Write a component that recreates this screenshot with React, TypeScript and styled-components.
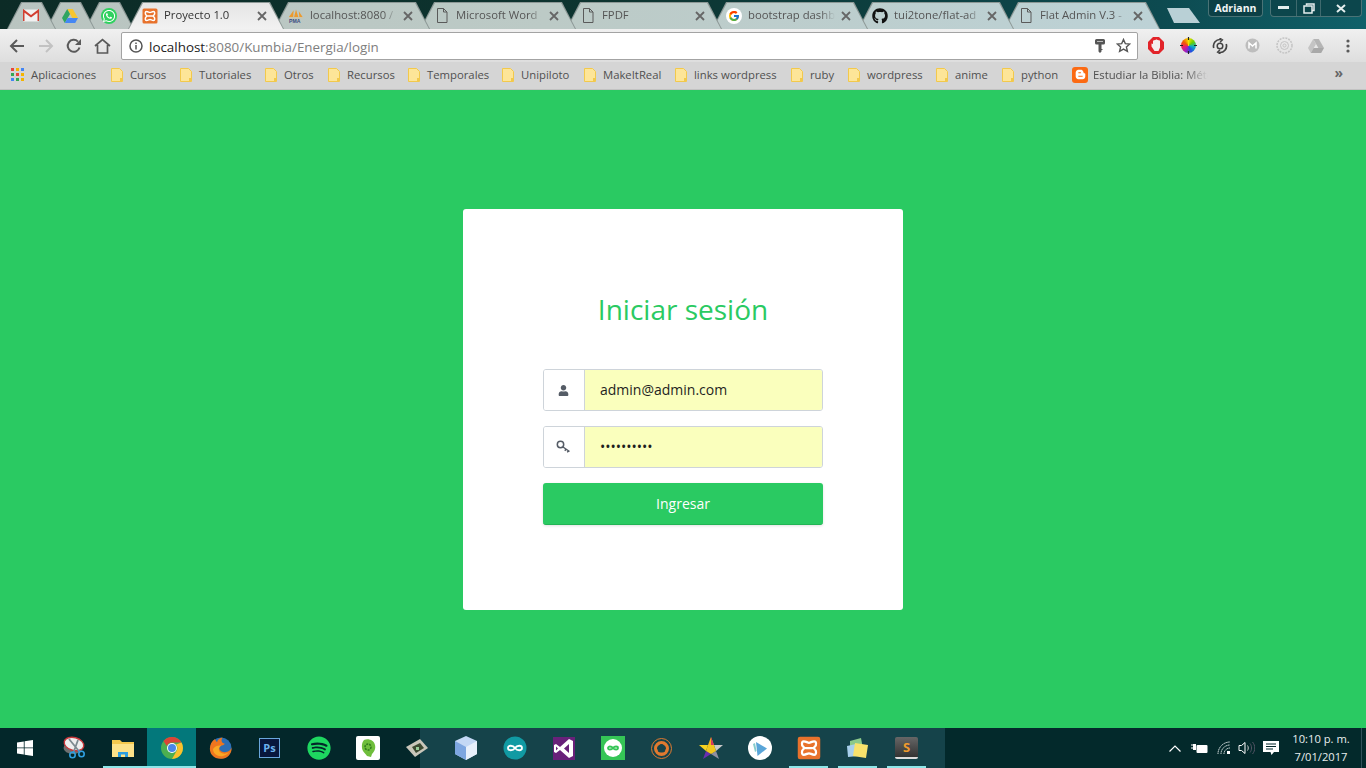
import React from 'react';
import styled, { createGlobalStyle } from 'styled-components';
import { FaUser, FaWhatsapp, FaGithub, FaSpotify, FaBloggerB } from 'react-icons/fa';
import { FcGoogle } from 'react-icons/fc';

const Global = createGlobalStyle`
  html, body { margin: 0; padding: 0; height: 100%; overflow: hidden; }
  #root { height: 100%; }
  * { box-sizing: border-box; }
`;

const Screen = styled.div`
  height: 100vh; display: flex; flex-direction: column;
  font-family: "Open Sans", "Noto Sans", sans-serif;
`;
const TabStrip = styled.div`
  height: 29px; flex: none; display: flex; align-items: flex-start; padding: 2px 4px 0 7px;
  background: linear-gradient(90deg, #0c2b26 0%, #0d3430 45%, #0d4a50 85%, #10616a 100%);
`;
const PinnedTabs = styled.div`display: flex; margin-right: 4px;`;
const Tab = styled.div<{ $w: number; $z: number; $active?: boolean }>`
  position: relative; flex: none; width: ${p => p.$w}px; height: 27px; margin-right: -10px;
  z-index: ${p => p.$z};
  display: flex; align-items: center; gap: 6px; padding: 0 17px 0 14px;
  clip-path: polygon(0 100%, 14px 0, calc(100% - 14px) 0, 100% 100%);
  background: #8d9896;
  color: ${p => (p.$active ? '#333' : '#555')};
  &::before {
    content: ''; position: absolute; inset: 0; z-index: -1;
    clip-path: polygon(1px 100%, 15px 1px, calc(100% - 15px) 1px, calc(100% - 1px) 100%);
    background: ${p => p.$active
      ? 'linear-gradient(#e4e4e4, #f2f2f2)'
      : 'linear-gradient(90deg, #b9c4c0 0%, #bccac6 40%, #bdd3d8 90%)'};
    background-attachment: ${p => (p.$active ? 'scroll' : 'fixed')};
  }
`;
const PinnedIcon = styled.span`flex: 1; display: flex; justify-content: center; margin: 0 -7px 0 -5px;`;
const Favicon = styled.span`flex: none; width: 16px; height: 16px; display: flex; align-items: center; justify-content: center;`;
const TabTitle = styled.span`
  flex: 1; min-width: 0; white-space: nowrap; overflow: hidden; font-size: 11.3px; line-height: 25px; height: 27px;
  -webkit-mask-image: linear-gradient(90deg, #000 84%, transparent 100%);
  mask-image: linear-gradient(90deg, #000 84%, transparent 100%);
`;
const NewTab = styled.div`
  flex: none; width: 33px; height: 15px; margin: 6px 0 0 17px;
  clip-path: polygon(0 0, 22px 0, 100% 100%, 7px 100%);
  background: #b9d0d6;
`;
const UserChip = styled.div`
  margin-left: auto; flex: none; width: 55px; height: 17px; margin-top: -2px;
  border: 1px solid #4a7376; border-top: 0; border-radius: 0 0 4px 4px;
  background: #0c3f45; color: #f2f6f6; font-size: 10.5px; font-weight: 700; line-height: 16px; text-align: center;
`;
const WindowButtons = styled.div`
  flex: none; display: flex; height: 17px; margin: -2px 0 0 7px;
  border: 1px solid #4a7376; border-top: 0; border-radius: 0 0 4px 4px; background: #0c464c;
`;
const WindowButton = styled.div<{ $w: number }>`
  width: ${p => p.$w}px; display: flex; align-items: center; justify-content: center;
  & + & { border-left: 1px solid #3f6a6e; }
`;

const Toolbar = styled.div`
  height: 33px; flex: none; display: flex; align-items: center; padding: 0 0 0 3px;
  background: linear-gradient(#f0f0f0, #dedede);
`;
const NavButton = styled.span`width: 28.5px; height: 28px; flex: none; display: flex; align-items: center; justify-content: center;`;
const Omnibox = styled.div`
  flex: none; width: 1017px; height: 28px; margin-left: 4px; display: flex; align-items: center; gap: 11px;
  background: #fff; border: 1px solid #a3a3a3; border-radius: 2px; padding: 0 6px 0 7px;
`;
const Url = styled.span`flex: 1; margin: 2px -5px 0 -5px; font-size: 13.4px; color: #7e7e7e; white-space: nowrap;`;
const UrlHost = styled.span`color: #222;`;
const Extensions = styled.div`flex: 1; display: flex; align-items: center; padding-left: 2px;`;
const ExtButton = styled.span`width: 32px; height: 24px; display: flex; align-items: center; justify-content: center;`;

const Bookmarks = styled.div`
  height: 28px; flex: none; position: relative; display: flex; align-items: center; gap: 14px; padding: 0 0 2px 11px;
  background: #d5d5d5; border-bottom: 1px solid #c2c2c2; overflow: hidden;
`;
const Bookmark = styled.div<{ $gap?: number }>`display: flex; align-items: center; gap: ${p => p.$gap ?? 7}px; flex: none;`;
const BookmarkLabel = styled.span<{ $w: number; $fade?: boolean }>`
  width: ${p => p.$w}px; font-size: 11.3px; color: #505050; white-space: nowrap;
  ${p => p.$fade && '-webkit-mask-image: linear-gradient(90deg,#000 80%,transparent); mask-image: linear-gradient(90deg,#000 80%,transparent);'}
`;
const More = styled.span`position: absolute; right: 23px; top: 4px; font-size: 14px; font-weight: 700; color: #666; line-height: 14px;`;

const Page = styled.main`
  flex: 1; background: #2aca62; display: flex; align-items: center; justify-content: center;
`;
const Card = styled.form`
  width: 440px; height: 401px; background: #fff; border-radius: 3px; padding: 79px 80px 0;
  margin-top: 1px;
`;
const Title = styled.h1`
  margin: 0 0 39px; font-size: 28px; line-height: 42px; font-weight: 400; text-align: center; color: #2aca62;
`;
const Field = styled.div`
  height: 42px; display: flex; margin-bottom: 15px; border: 1px solid #ced4da; border-radius: 3px; overflow: hidden;
`;
const Addon = styled.span`
  flex: none; width: 41px; display: flex; align-items: center; justify-content: center; padding-right: 1px;
  background: #fff; border-right: 1px solid #ced4da; color: #555c66;
`;
const Input = styled.input`
  flex: 1; min-width: 0; border: 0; outline: 0; padding: 0 15px 2px; background: #faffbd;
  font: 400 14px "Open Sans", sans-serif; color: #1f1f1f;
`;
const Submit = styled.button`
  display: block; width: 100%; height: 42px; border: 0; border-bottom: 1px solid #22b455; border-radius: 3px;
  background: #2aca62; color: #fff; font: 400 14px "Open Sans", sans-serif;
  box-shadow: 0 1px 3px rgba(0,0,0,.12);
`;

const Taskbar = styled.footer`
  height: 40px; flex: none; display: flex; align-items: stretch;
  background: linear-gradient(90deg, #03272a 0, #03272a 420px, #15434a 420px, #15434a 945px, #03292b 945px);
`;
const TaskButton = styled.div<{ $open?: boolean; $active?: boolean; $joined?: boolean }>`
  width: 49px; flex: none; display: flex; align-items: center; justify-content: center; position: relative;
  background: ${p => (p.$active ? '#03787b' : 'transparent')};
  ${p => p.$open && `
    &::after { content: ''; position: absolute; left: ${p.$active ? 0 : '5px'}; right: ${p.$active || p.$joined ? 0 : '5px'}; bottom: 0; height: 2px; background: #8ee6e8; }
  `}
`;
const Tray = styled.div`margin-left: auto; display: flex; align-items: center; color: #fff;`;
const TrayIcon = styled.span<{ $w: number }>`width: ${p => p.$w}px; display: flex; justify-content: center;`;
const Clock = styled.div`
  width: 76px; padding-right: 4px; text-align: center; font-size: 11.2px; line-height: 18px; color: #e8eeee;
`;
const ShowDesktop = styled.span`width: 5px; height: 100%; border-left: 1px solid #31525a;`;

/* ---------- icons ---------- */
const Xampp = ({ s = 16 }: { s?: number }) => (
  <svg width={s} height={s} viewBox="0 0 16 16">
    <rect x=".5" y=".5" width="15" height="15" rx="1.500" fill="#e8722c" />
    <path d="M4.500 3.500C6 3.500 7 4.500 8 4.500S10 3.500 11.500 3.500C13 3.500 13 6 12 7L11 8l1 1c1 1 1 3.500-.5 3.500C10 12.500 9 11.500 8 11.500S6 12.500 4.500 12.500C3 12.500 3 10 4 9l1-1-1-1C3 6 3 3.500 4.500 3.500zM5.500 8h5" fill="none" stroke="#fff" strokeWidth="1.500" />
  </svg>
);
const Doc = () => (
  <svg width="12" height="15" viewBox="0 0 12 15" fill="none" stroke="#5a5a5a">
    <path d="M1.500.5h6l3.500 3.500v10.500h-9.500zM7.500.5v3.500h3.500" />
  </svg>
);
const Close = () => (
  <svg width="10" height="10" viewBox="0 0 10 10" style={{ flex: 'none' }}>
    <path d="M1 1l8 8M9 1l-8 8" stroke="#666" strokeWidth="1.800" />
  </svg>
);
const Gmail = () => (
  <svg width="16" height="13" viewBox="0 0 16 13">
    <rect y=".5" width="16" height="12" rx="1" fill="#f1f1f1" />
    <path d="M.5 12V1.500L8 7.200l7.500-5.700V12" fill="none" stroke="#d23f31" strokeWidth="2" />
  </svg>
);
const Drive = ({ mono }: { mono?: boolean }) => (
  <svg width="16" height="14" viewBox="0 0 16 14">
    <path d="M5.200 0h5.600l5.200 9h-5.600z" fill={mono ? '#b5b5b5' : '#f7c62f'} />
    <path d="M5.200 0L0 9l2.800 5 5.200-9z" fill={mono ? '#c4c4c4' : '#2fa561'} />
    <path d="M2.800 14h10.400L16 9H5.600z" fill={mono ? '#a8a8a8' : '#4587f3'} />
  </svg>
);
const Whatsapp = () => (
  <svg width="16" height="16" viewBox="0 0 16 16"><circle cx="8" cy="8" r="8" fill="#2fd15f" /><foreignObject width="16" height="16"><FaWhatsapp size={14} color="#fff" style={{ margin: 1, display: 'block' }} /></foreignObject></svg>
);
const Pma = () => (
  <svg width="17" height="16" viewBox="0 0 17 16">
    <path d="M1 9L6 2l-.5 7zM6.500 9l2-8 2.500 8zM12 9l-.5-6 4 6z" fill="#ec9a2e" />
    <path d="M1 10h15" stroke="#f3c27a" strokeWidth=".5" />
    <text x="1" y="15" fontSize="5.500" fontWeight="700" fill="#3b4a80" fontFamily="Liberation Sans">PMA</text>
  </svg>
);
const Google = () => (
  <svg width="16" height="16" viewBox="0 0 16 16"><circle cx="8" cy="8" r="8" fill="#fff" /><foreignObject width="16" height="16"><FcGoogle size={12} style={{ margin: 2, display: 'block' }} /></foreignObject></svg>
);
const Back = ({ c = '#5a5a5a' }: { c?: string }) => (
  <svg width="16" height="14" viewBox="0 0 16 14" fill="none" stroke={c} strokeWidth="2"><path d="M15 7H2M8 1L2 7l6 6" /></svg>
);
const Forward = () => (
  <svg width="16" height="14" viewBox="0 0 16 14" fill="none" stroke="#c2c2c2" strokeWidth="2"><path d="M1 7h13M8 1l6 6-6 6" /></svg>
);
const Reload = () => (
  <svg width="16" height="16" viewBox="0 0 16 16" fill="none"><path d="M13.500 9.500A6 6 0 1 1 12 3.600" stroke="#5a5a5a" strokeWidth="2" /><path d="M15 1v6H9z" fill="#5a5a5a" /></svg>
);
const Home = () => (
  <svg width="17" height="16" viewBox="0 0 17 16" fill="none" stroke="#5a5a5a" strokeWidth="1.700"><path d="M1 8l7.500-6.500L16 8M3.500 7v8h10V7" /></svg>
);
const Info = () => (
  <svg width="14" height="14" viewBox="0 0 14 14" fill="none"><circle cx="7" cy="7" r="6" stroke="#555" strokeWidth="1.500" /><path d="M7 6v4.500M7 3.500v1.500" stroke="#555" strokeWidth="1.500" /></svg>
);
const SmallKey = () => (
  <svg width="10" height="14" viewBox="0 0 10 14"><path d="M1.500 0h7Q10 0 10 1.500V4Q10 5.500 8.500 5.500H6.500V10H7.500V11H6.500V12.500L5 14 3.500 12.500V5.500H1.500Q0 5.500 0 4V1.500Q0 0 1.500 0z" fill="#555" /><rect x="2" y="2" width="6" height="1" fill="#bbb" /></svg>
);
const Star = () => (
  <svg width="15" height="15" viewBox="0 0 15 15"><path d="M7.500 1.500l1.800 4.100 4.500.4-3.400 3 1 4.400-3.900-2.300-3.900 2.300 1-4.400-3.400-3 4.500-.4z" fill="none" stroke="#555" strokeWidth="1.400" /></svg>
);
const StopHand = () => (
  <svg width="16" height="17" viewBox="0 0 16 17"><path d="M5 0h6l5 5v7l-5 5H5l-5-5V5z" fill="#e2242a" /><path d="M3.500 6.500l1.500.5V3.500h1.300V3h1.400v-.500h1.500V3h1.400v.500h1.400v7L10.500 14H6.500L3.500 9.500z" fill="#f4eeee" /></svg>
);
const ColorDisc = styled.div`
  width: 15px; height: 15px; margin: 1px; border-radius: 50%;
  background: conic-gradient(#f6e000, #6ad000, #10b0c0, #2050e0, #a020c0, #f02060, #f06000, #f6e000);
`;
const ColorWheel = () => (
  <svg width="17" height="17" viewBox="0 0 17 17">
    <foreignObject width="17" height="17"><ColorDisc /></foreignObject>
    <path d="M8.500 0v3M8.500 14v3M0 8.500h3M14 8.500h3" stroke="#222" strokeWidth="1.200" />
  </svg>
);
const SyncIcon = () => (
  <svg width="16" height="16" viewBox="0 0 16 16" fill="none" stroke="#444" strokeWidth="1.700"><path d="M1.800 10A6.500 6.500 0 0 1 9 1.600M14.200 6A6.500 6.500 0 0 1 7 14.400" /><path d="M7.500 0l3 1.800L8 4.300M8.500 16l-3-1.800L8 11.700" strokeWidth="1.300" /><circle cx="8" cy="8" r="2.800" strokeWidth="1.500" /></svg>
);
const GrayM = () => (
  <svg width="15" height="15" viewBox="0 0 15 15"><circle cx="7.500" cy="7.500" r="7" fill="#bdbdbd" /><path d="M4 10.500V5l3.500 3L11 5v5.500" fill="none" stroke="#fff" strokeWidth="1.500" /></svg>
);
const GrayWheel = () => (
  <svg width="17" height="17" viewBox="0 0 17 17" fill="none" stroke="#c4c4c4"><circle cx="8.500" cy="8.500" r="7.500" strokeWidth="1.500" strokeDasharray="2 1" /><circle cx="8.500" cy="8.500" r="4" /><circle cx="8.500" cy="8.500" r="1.500" /></svg>
);
const Kebab = () => (
  <svg width="4" height="14" viewBox="0 0 4 14" fill="#5a5a5a"><circle cx="2" cy="2" r="1.600" /><circle cx="2" cy="7" r="1.600" /><circle cx="2" cy="12" r="1.600" /></svg>
);
const Apps = () => (
  <svg width="13" height="13" viewBox="0 0 13 13">
    {['#e8453c', '#f4b400', '#4285f4', '#34a853', '#e8453c', '#f4b400', '#4285f4', '#34a853', '#f4b400'].map((c, i) => (
      <rect key={i} x={(i % 3) * 5} y={Math.floor(i / 3) * 5} width="3" height="3" fill={c} />
    ))}
  </svg>
);
const Folder = () => (
  <svg width="12" height="14" viewBox="0 0 12 14"><path d="M.5.500h8l3 3v10h-11z" fill="#fde598" stroke="#f2c94c" /><rect x="9" y="10" width="2" height="3" fill="#f2c94c" /></svg>
);
const BloggerTile = styled.span`
  width: 16px; height: 16px; border-radius: 3px; background: #fb6a13;
  display: flex; align-items: center; justify-content: center;
`;
const KeyIcon = () => (
  <svg width="15" height="14" viewBox="0 0 15 14" fill="none" stroke="#555c66" strokeWidth="1.500">
    <circle cx="4.500" cy="4.500" r="3.200" /><path d="M7 7l6.500 4.500M10 9.200l-1.200 1.500M12.300 10.800l-1 1.500" />
  </svg>
);
const WinLogo = () => (
  <svg width="16" height="16" viewBox="0 0 16 16" fill="#fff"><path d="M0 2.400l6.800-1v6.100H0zM7.600 1.300L16 0v7.500H7.600zM0 8.300h6.800v6.200L0 13.500zM7.600 8.300H16V16l-8.400-1.200z" /></svg>
);
const Snip = () => (
  <svg width="24" height="26" viewBox="0 0 24 26">
    <ellipse cx="11" cy="13" rx="9.500" ry="6" fill="#6f6f6f" />
    <ellipse cx="12" cy="9" rx="10" ry="6.500" transform="rotate(15 12 9)" fill="#eee" stroke="#c8383c" strokeWidth="1.400" />
    <path d="M7 4l9 11M16 5l-4 11" stroke="#7d8a90" strokeWidth="1.800" />
    <circle cx="10.500" cy="20" r="2.700" fill="none" stroke="#2f9fe0" strokeWidth="1.600" />
    <circle cx="19.500" cy="19" r="2.700" fill="none" stroke="#2f9fe0" strokeWidth="1.600" />
    <path d="M12 16l-1 2M16 15l2 2" stroke="#2f9fe0" strokeWidth="1.600" />
  </svg>
);
const Explorer = () => (
  <svg width="22" height="18" viewBox="0 0 22 18">
    <path d="M0 1h8l2 2h12v15H0z" fill="#f4c94e" /><path d="M0 5h22v13H0z" fill="#fde38a" />
    <path d="M6 18v-5h10v5h-3v-2.500H9V18z" fill="#2d9fe0" />
  </svg>
);
const Chrome = () => (
  <svg width="22" height="22" viewBox="0 0 22 22">
    <circle cx="11" cy="11" r="11" fill="#4caf50" />
    <path d="M11 0a11 11 0 0 1 9.500 5.500H11A5.500 5.500 0 0 0 5.800 9L2.500 4A11 11 0 0 1 11 0z" fill="#db4437" />
    <path d="M20.500 5.500A11 11 0 0 1 11 22l4.700-8.200A5.500 5.500 0 0 0 15 7.500z" fill="#fbc02d" />
    <circle cx="11" cy="11" r="5" fill="#fff" /><circle cx="11" cy="11" r="4" fill="#4a86e8" />
  </svg>
);
const Firefox = () => (
  <svg width="23" height="23" viewBox="0 0 23 23">
    <circle cx="12" cy="11" r="10.500" fill="#2c6fb5" />
    <path d="M6 2C1 5-1 13 3 18c5 6 16 5 19-3 .5-1.500.7-3 .6-4.500-1 3.500-6 6-10 4-3-1.500-3-5 0-6 2-.6 3-.5 3-2-3-.5-4-3-2-6-3 .3-5 2-5.500 4.500C7 4.500 6.500 3 6 2z" fill="#ee761f" />
    <path d="M4 12c0 5 5 8 10 7 3-.7 5-2.500 6.500-4.500-2 2-5 3-8 1.500C9 14.500 9 10 12.500 8.500 9 8 6 9 4 12z" fill="#f9a825" />
  </svg>
);
const PsTile = styled.span`
  width: 21px; height: 20px; background: #08173d; border: 1px solid #6aa6dc; color: #6cb2ee;
  font: 700 11px/18px "Open Sans", sans-serif; text-align: center;
`;
const Spotify = () => <FaSpotify size={24} color="#1ed760" />;
const GreenApp = () => (
  <svg width="24" height="24" viewBox="0 0 24 24">
    <rect width="24" height="24" rx="2" fill="#fff" />
    <path d="M8 4c4-2 10 0 11 5 1 4-1 7-3 9l-1 3-4-1c-1-2-3-3-4-5-2-4-1-9 1-11z" fill="#6fbe3c" />
    <circle cx="12" cy="11" r="3" fill="none" stroke="#2f7a1c" strokeWidth="1.500" strokeDasharray="2 1" />
  </svg>
);
const Diamond = () => (
  <svg width="24" height="20" viewBox="0 0 24 20"><path d="M1 9L15 1l8 9-13 9z" fill="#c9c6ba" /><path d="M7 9l8-4 4 5-8 5z" fill="#3c4a32" /><path d="M11 9h3v3h-3z" fill="#9c9" /></svg>
);
const Cube = () => (
  <svg width="22" height="24" viewBox="0 0 22 24"><path d="M11 0l11 5v13l-11 6-11-6V5z" fill="#c4d8f5" /><path d="M0 5l11 6v13L0 18z" fill="#7da6e0" /><path d="M22 5l-11 6v13l11-6z" fill="#e8f0fb" /></svg>
);
const Arduino = () => (
  <svg width="24" height="24" viewBox="0 0 24 24" fill="none"><circle cx="12" cy="12" r="11.500" fill="#119aa3" /><path d="M12 12c-2-3-7-3-7 0s5 3 7 0c2-3 7-3 7 0s-5 3-7 0z" stroke="#fff" strokeWidth="1.800" /></svg>
);
const VS = () => (
  <svg width="22" height="23" viewBox="0 0 22 23"><rect width="22" height="23" fill="#68217a" /><path d="M16 2l4 2v15l-4 2L7 13l-4 3-2-1V8l2-1 4 3zM16 7l-5 4.500 5 4.500zM3 9.500v4l2-2z" fill="#fff" /></svg>
);
const Linked = () => (
  <svg width="24" height="24" viewBox="0 0 24 24" fill="none"><rect width="24" height="24" fill="#35c556" /><circle cx="12" cy="12" r="9" fill="#fff" /><path d="M12 12c-1.500-2-5-2-5 0s3.500 2 5 0c1.500-2 5-2 5 0s-3.500 2-5 0z" stroke="#35c556" strokeWidth="1.800" /></svg>
);
const Ring = () => (
  <svg width="21" height="21" viewBox="0 0 21 21" fill="none" stroke="#e07a30"><circle cx="10.500" cy="10.500" r="10" /><circle cx="10.500" cy="10.500" r="6" strokeWidth="3" /><path d="M10.500 4.500l5.500 4.500-2 6H7l-2-6z" strokeWidth="1" /></svg>
);
const StarApp = () => (
  <svg width="24" height="24" viewBox="0 0 24 24">
    <path d="M12 1l3 8H9z" fill="#f2b51d" /><path d="M15 9h9l-7 6z" fill="#c9c9c9" /><path d="M17 15l3 8-8-5z" fill="#8f8fa0" />
    <path d="M12 18l-8 5 3-8z" fill="#6a2fb0" /><path d="M7 15L0 9h9z" fill="#f6d21f" /><path d="M12 1l3 8h-3z" fill="#d8345f" /><path d="M9 9h6l2 6-5 3-5-3z" fill="#f2c71d" />
  </svg>
);
const Player = () => (
  <svg width="24" height="24" viewBox="0 0 24 24"><circle cx="12" cy="12" r="12" fill="#fff" /><path d="M8 6l11 6.500L9.500 20z" fill="#5aa5d8" /><path d="M5 8l2-1 1.500 8-1.500 1z" fill="#8cc" /></svg>
);
const Notes = () => (
  <svg width="24" height="21" viewBox="0 0 24 21"><path d="M4 3l11-3 2 11-13 4z" fill="#8cc98a" /><path d="M1 8l9-2 2 12-10 1z" fill="#a8d0ec" /><path d="M9 5l13 2-2 13-13-2z" fill="#f8e26c" /></svg>
);
const SublimeTile = styled.span`
  width: 23px; height: 22px; border-radius: 2px; background: linear-gradient(#666, #333); border-bottom: 2px solid #ddd;
  color: #f09a2c; font: 700 13px/20px "Open Sans", sans-serif; text-align: center;
`;
const Chevron = () => (
  <svg width="12" height="7" viewBox="0 0 12 7" fill="none" stroke="#fff" strokeWidth="1.200"><path d="M.5 6.500L6 1l5.500 5.500" /></svg>
);
const Battery = () => (
  <svg width="17" height="11" viewBox="0 0 17 11"><path d="M0 2h3M0 5h3" stroke="#fff" /><rect x="2" y="1" width="3" height="6" fill="#fff" /><rect x="5.500" y="2" width="11" height="8" fill="#fff" rx="1" /></svg>
);
const Wifi = () => (
  <svg width="14" height="14" viewBox="0 0 14 14" fill="none" stroke="#dfe7e7"><path d="M1 13A12 12 0 0 1 13 1M4 13a9 9 0 0 1 9-9M7 13a6 6 0 0 1 6-6" strokeDasharray="1.500 .5" /><rect x="10" y="10" width="3" height="3" fill="#fff" stroke="none" /></svg>
);
const Volume = () => (
  <svg width="17" height="14" viewBox="0 0 17 14" fill="none"><path d="M1 4.500h2.500L7 1.500v11l-3.500-3H1z" stroke="#fff" /><path d="M9.500 4.500c1 1.500 1 3.500 0 5" stroke="#ccc" /><path d="M12 2.500c2 2.500 2 6.500 0 9M14.500 1c3 3.500 3 8.500 0 12" stroke="#556" /></svg>
);
const Notify = () => (
  <svg width="16" height="15" viewBox="0 0 16 15"><path d="M0 0h16v11h-5l-2.500 3-1-3H0z" fill="#fff" /><path d="M3 3h10M3 5.500h10M3 8h7" stroke="#03272a" /></svg>
);

const bookmarks = [
  ['Cursos', 36], ['Tutoriales', 52], ['Otros', 30], ['Recursos', 47], ['Temporales', 61], ['Unipiloto', 49],
  ['MakeItReal', 58], ['links wordpress', 83], ['ruby', 24], ['wordpress', 55], ['anime', 33], ['python', 37],
] as const;

const tabs: { icon: React.ReactNode; title: string; active?: boolean }[] = [
  { icon: <Xampp />, title: 'Proyecto 1.0', active: true },
  { icon: <Pma />, title: 'localhost:8080 /' },
  { icon: <Doc />, title: 'Microsoft Word' },
  { icon: <Doc />, title: 'FPDF' },
  { icon: <Google />, title: 'bootstrap dashb' },
  { icon: <FaGithub size={16} color="#111" />, title: 'tui2tone/flat-ad' },
  { icon: <Doc />, title: 'Flat Admin V.3 -' },
];

const taskIcons: { icon: React.ReactNode; open?: boolean; active?: boolean; joined?: boolean }[] = [
  { icon: <WinLogo /> },
  { icon: <Snip /> },
  { icon: <Explorer />, open: true, joined: true },
  { icon: <Chrome />, open: true, active: true },
  { icon: <Firefox /> },
  { icon: <PsTile>Ps</PsTile> },
  { icon: <Spotify /> },
  { icon: <GreenApp /> },
  { icon: <Diamond /> },
  { icon: <Cube /> },
  { icon: <Arduino /> },
  { icon: <VS /> },
  { icon: <Linked /> },
  { icon: <Ring /> },
  { icon: <StarApp /> },
  { icon: <Player /> },
  { icon: <Xampp s={24} />, open: true },
  { icon: <Notes />, open: true },
  { icon: <SublimeTile>S</SublimeTile>, open: true },
];

export default function App() {
  return (
    <Screen>
      <Global />
      <TabStrip>
        <PinnedTabs>
          <Tab $w={49} $z={3}><PinnedIcon><Gmail /></PinnedIcon></Tab>
          <Tab $w={49} $z={2}><PinnedIcon><Drive /></PinnedIcon></Tab>
          <Tab $w={49} $z={1}><PinnedIcon><Whatsapp /></PinnedIcon></Tab>
        </PinnedTabs>
        {tabs.map((t, i) => (
          <Tab key={t.title} $w={156} $z={t.active ? 20 : 10 - i} $active={t.active}>
            <Favicon>{t.icon}</Favicon>
            <TabTitle>{t.title}</TabTitle>
            <Close />
          </Tab>
        ))}
        <NewTab />
        <UserChip>Adriann</UserChip>
        <WindowButtons>
          <WindowButton $w={25}>
            <svg width="11" height="4"><rect width="11" height="3" fill="#e4eeee" /></svg>
          </WindowButton>
          <WindowButton $w={24}>
            <svg width="12" height="11" fill="none" stroke="#e4eeee" strokeWidth="1.500"><path d="M3.500 2.500V1h7.500v6.500H9" /><rect x="1" y="3" width="8" height="7" /></svg>
          </WindowButton>
          <WindowButton $w={41}>
            <svg width="10" height="9"><path d="M1 1l8 7M9 1L1 8" stroke="#e4eeee" strokeWidth="2" /></svg>
          </WindowButton>
        </WindowButtons>
      </TabStrip>
      <Toolbar>
        <NavButton><Back /></NavButton>
        <NavButton><Forward /></NavButton>
        <NavButton><Reload /></NavButton>
        <NavButton><Home /></NavButton>
        <Omnibox>
          <Info />
          <Url><UrlHost>localhost</UrlHost>:8080/Kumbia/Energia/login</Url>
          <SmallKey />
          <Star />
        </Omnibox>
        <Extensions>
          <ExtButton><StopHand /></ExtButton>
          <ExtButton><ColorWheel /></ExtButton>
          <ExtButton><SyncIcon /></ExtButton>
          <ExtButton><GrayM /></ExtButton>
          <ExtButton><GrayWheel /></ExtButton>
          <ExtButton><Drive mono /></ExtButton>
          <ExtButton><Kebab /></ExtButton>
        </Extensions>
      </Toolbar>
      <Bookmarks>
        <Bookmark><Apps /><BookmarkLabel $w={66}>Aplicaciones</BookmarkLabel></Bookmark>
        {bookmarks.map(([name, w]) => (
          <Bookmark key={name}><Folder /><BookmarkLabel $w={w}>{name}</BookmarkLabel></Bookmark>
        ))}
        <Bookmark $gap={5}>
          <BloggerTile><FaBloggerB size={11} color="#fff" /></BloggerTile>
          <BookmarkLabel $w={115} $fade>Estudiar la Biblia: Méto</BookmarkLabel>
        </Bookmark>
        <More>»</More>
      </Bookmarks>
      <Page>
        <Card onSubmit={e => e.preventDefault()}>
          <Title>Iniciar sesión</Title>
          <Field>
            <Addon><FaUser size={11} /></Addon>
            <Input type="text" value="admin@admin.com" readOnly />
          </Field>
          <Field>
            <Addon><KeyIcon /></Addon>
            <Input type="password" value="1234567890" readOnly />
          </Field>
          <Submit type="submit">Ingresar</Submit>
        </Card>
      </Page>
      <Taskbar>
        {taskIcons.map((t, i) => (
          <TaskButton key={i} $open={t.open} $active={t.active} $joined={t.joined}>{t.icon}</TaskButton>
        ))}
        <Tray>
          <TrayIcon $w={20}><Chevron /></TrayIcon>
          <TrayIcon $w={28}><Battery /></TrayIcon>
          <TrayIcon $w={22}><Wifi /></TrayIcon>
          <TrayIcon $w={22}><Volume /></TrayIcon>
          <TrayIcon $w={28}><Notify /></TrayIcon>
          <Clock>10:10 p. m.<br />7/01/2017</Clock>
          <ShowDesktop />
        </Tray>
      </Taskbar>
    </Screen>
  );
}
